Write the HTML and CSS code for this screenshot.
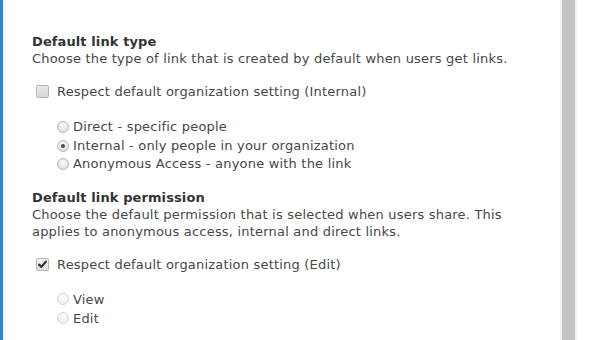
FILE: index.html
```html
<!DOCTYPE html>
<html lang="en">
<head>
<meta charset="utf-8">
<title>Sharing settings</title>
<link rel="stylesheet" href="styles.css">
</head>
<body>
<div class="frame">
  <main class="panel">
    <section class="section first">
      <h2 class="title">Default link type</h2>
      <p class="desc">Choose the type of link that is created by default when users get links.</p>
      <label class="check"><span class="box"></span>Respect default organization setting (Internal)</label>
      <div class="radios">
        <label class="radio"><span class="dot"></span>Direct - specific people</label>
        <label class="radio"><span class="dot on"></span>Internal - only people in your organization</label>
        <label class="radio"><span class="dot"></span>Anonymous Access - anyone with the link</label>
      </div>
    </section>
    <section class="section second">
      <h2 class="title">Default link permission</h2>
      <p class="desc">Choose the default permission that is selected when users share. This applies to anonymous access, internal and direct links.</p>
      <label class="check"><span class="box checked"><svg width="11" height="11" viewBox="0 0 11 11"><path d="M2 5.5 L4.3 8 L9 2.5" fill="none" stroke="#333" stroke-width="2.1" stroke-linecap="round" stroke-linejoin="round"/></svg></span>Respect default organization setting (Edit)</label>
      <div class="radios tall">
        <label class="radio"><span class="dot off"></span>View</label>
        <label class="radio"><span class="dot off"></span>Edit</label>
      </div>
    </section>
  </main>
  <div class="scrollbar"><div class="thumb"></div></div>
</div>
</body>
</html>
```
FILE: styles.css
```css
html, body {
  margin: 0;
  padding: 0;
  background: #ffffff;
}
body {
  font-family: "DejaVu Sans", Verdana, sans-serif;
  font-size: 13px;
  letter-spacing: 0.2px;
  color: #474747;
}
.frame {
  display: flex;
  height: 340px;
  overflow: hidden;
}
.panel {
  width: 528px;
  border-left: 3px solid #2b88d8;
  padding: 33px 0 0 29px;
  box-sizing: content-box;
}
.section {
  display: flex;
  flex-direction: column;
  align-items: flex-start;
}
.second {
  margin-top: 15px;
}
.title {
  margin: 0;
  font-size: 13px;
  font-weight: bold;
  line-height: 17px;
  color: #333333;
  letter-spacing: 0.1px;
}
.desc {
  margin: 0;
  line-height: 17px;
  max-width: 515px;
}
.check {
  display: flex;
  align-items: center;
  gap: 8px;
  margin-top: 16px;
  margin-left: 4px;
  line-height: 17px;
}
.second .check {
  margin-top: 16px;
}
.box {
  width: 11px;
  height: 11px;
  border: 1px solid #b5b5b5;
  border-radius: 2px;
  background: linear-gradient(#e9e9e9, #d6d6d6);
  display: flex;
  align-items: center;
  justify-content: center;
}
.box.checked {
  background: linear-gradient(#f2f2f2, #dedede);
}
.radios {
  display: flex;
  flex-direction: column;
  margin-top: 18px;
  margin-left: 25px;
}
.radios.tall {
  margin-top: 17px;
}
.radio {
  display: flex;
  align-items: center;
  gap: 4px;
  line-height: 18.5px;
}
.tall .radio {
  line-height: 19px;
}
.dot {
  width: 10px;
  height: 10px;
  border: 1px solid #b9b9b9;
  border-radius: 50%;
  background: radial-gradient(circle at 50% 35%, #fbfbfb, #d9d9d9);
  display: flex;
  align-items: center;
  justify-content: center;
}
.dot.on::after {
  content: "";
  width: 4px;
  height: 4px;
  border-radius: 50%;
  background: #4a4a4a;
}
.dot.off {
  border-color: #d6d6d6;
  background: radial-gradient(circle at 50% 35%, #fdfdfd, #ebebeb);
}
.scrollbar {
  width: 17px;
  height: 340px;
  background: #f2f2f2;
  display: flex;
  justify-content: center;
}
.thumb {
  width: 13px;
  height: 100%;
  background: #c3c3c3;
}
```
